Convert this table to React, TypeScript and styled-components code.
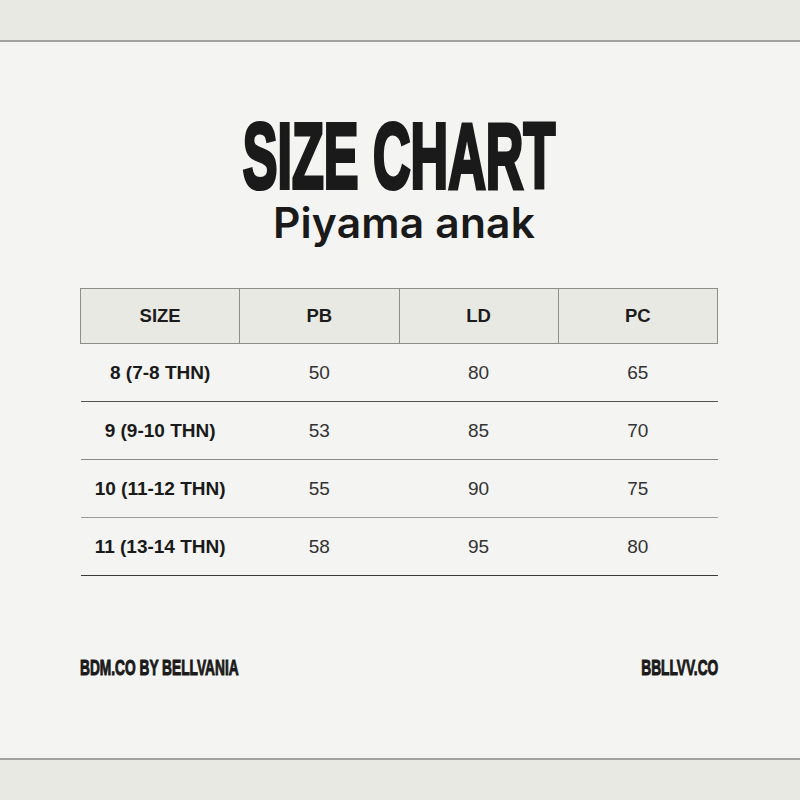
import React from 'react';
import styled, { createGlobalStyle } from 'styled-components';

const GlobalStyle = createGlobalStyle`
  html, body {
    margin: 0;
    padding: 0;
    background: #f4f4f2;
  }
  body {
    font-family: 'Liberation Sans', Arial, sans-serif;
    color: #1a1a1a;
  }
`;

const Page = styled.div`
  width: 800px;
  height: 800px;
  display: flex;
  flex-direction: column;
  background: #f4f4f2;
  overflow: hidden;
`;

const Band = styled.div<{ $edge: 'top' | 'bottom' }>`
  height: 40px;
  flex-shrink: 0;
  background: #e9e9e3;
  ${({ $edge }) =>
    $edge === 'top' ? 'border-bottom: 2px solid #a2a29e;' : 'border-top: 2px solid #a2a29e;'}
`;

const Main = styled.main`
  flex: 1;
  display: flex;
  flex-direction: column;
  align-items: center;
  padding: 70px 82px 0 80px;
`;

const Condensed = styled.span<{ $scale: number; $origin: string }>`
  display: inline-block;
  font-family: 'Liberation Sans', Arial, sans-serif;
  font-weight: 700;
  white-space: nowrap;
  transform: scaleX(${({ $scale }) => $scale});
  transform-origin: ${({ $origin }) => $origin};
  -webkit-text-stroke: 0.045em #1a1a1a;
`;

const Title = styled.h1`
  margin: 0;
  font-size: 93px;
  line-height: 88px;
  height: 88px;
  text-align: center;
  color: #1a1a1a;
`;

const Subtitle = styled.h2`
  margin: 1px 0 0 10px;
  font-family: Inter, 'Noto Sans', sans-serif;
  font-weight: 600;
  font-size: 42.5px;
  line-height: 44px;
  color: #1a1a1a;
  letter-spacing: 0.2px;
`;

const Table = styled.table`
  margin-top: 43px;
  width: 638px;
  border-collapse: collapse;
  table-layout: fixed;
`;

const HeadCell = styled.th`
  height: 54px;
  padding: 0;
  background: #e9e9e3;
  border: 1px solid #8e8e8a;
  font-size: 18.5px;
  font-weight: 700;
  color: #1c1c1c;
  text-align: center;
`;

const Row = styled.tr<{ $line: string }>`
  border-bottom: 1px solid ${({ $line }) => $line};
`;

const Cell = styled.td<{ $strong?: boolean }>`
  height: 57px;
  padding: 0;
  text-align: center;
  font-size: 19px;
  font-weight: ${({ $strong }) => ($strong ? 700 : 400)};
  color: ${({ $strong }) => ($strong ? '#1a1a1a' : '#333')};
`;

const Footer = styled.footer`
  width: 100%;
  margin-top: 81px;
  display: flex;
  justify-content: space-between;
  font-size: 22.5px;
  line-height: 22px;
`;

const rows = [
  { size: '8 (7-8 THN)', pb: 50, ld: 80, pc: 65, line: '#555' },
  { size: '9 (9-10 THN)', pb: 53, ld: 85, pc: 70, line: '#888' },
  { size: '10 (11-12 THN)', pb: 55, ld: 90, pc: 75, line: '#9c9c9c' },
  { size: '11 (13-14 THN)', pb: 58, ld: 95, pc: 80, line: '#3a3a3a' },
];

export default function App() {
  return (
    <>
      <GlobalStyle />
      <Page>
        <Band $edge="top" />
        <Main>
          <Title>
            <Condensed $scale={0.56} $origin="center">SIZE CHART</Condensed>
          </Title>
          <Subtitle>Piyama anak</Subtitle>

          <Table>
            <thead>
              <tr>
                <HeadCell>SIZE</HeadCell>
                <HeadCell>PB</HeadCell>
                <HeadCell>LD</HeadCell>
                <HeadCell>PC</HeadCell>
              </tr>
            </thead>
            <tbody>
              {rows.map((r) => (
                <Row key={r.size} $line={r.line}>
                  <Cell $strong>{r.size}</Cell>
                  <Cell>{r.pb}</Cell>
                  <Cell>{r.ld}</Cell>
                  <Cell>{r.pc}</Cell>
                </Row>
              ))}
            </tbody>
          </Table>

          <Footer>
            <Condensed $scale={0.61} $origin="left">BDM.CO BY BELLVANIA</Condensed>
            <Condensed $scale={0.61} $origin="right">BBLLVV.CO</Condensed>
          </Footer>
        </Main>
        <Band $edge="bottom" />
      </Page>
    </>
  );
}
